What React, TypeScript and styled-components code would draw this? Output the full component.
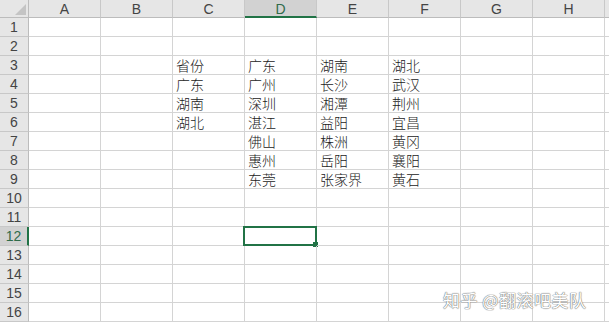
import React from "react";
import styled, { createGlobalStyle, css } from "styled-components";

const Global = createGlobalStyle`
  html, body { margin: 0; padding: 0; background: #fff; overflow: hidden; }
  #root { width: 609px; height: 325px; }
`;

const COLS = ["A", "B", "C", "D", "E", "F", "G", "H", "I"];
const VISIBLE_LABELS = 8;
const ROWS = 16;
const SEL_COL = "D";
const SEL_ROW = 12;

const data: Record<string, string> = {
  C3: "省份", C4: "广东", C5: "湖南", C6: "湖北",
  D3: "广东", D4: "广州", D5: "深圳", D6: "湛江", D7: "佛山", D8: "惠州", D9: "东莞",
  E3: "湖南", E4: "长沙", E5: "湘潭", E6: "益阳", E7: "株洲", E8: "岳阳", E9: "张家界",
  F3: "湖北", F4: "武汉", F5: "荆州", F6: "宜昌", F7: "黄冈", F8: "襄阳", F9: "黄石",
};

const Sheet = styled.div`
  position: relative;
  width: 609px;
  height: 325px;
  overflow: hidden;
  display: grid;
  grid-template-columns: 29px repeat(9, 72px);
  grid-template-rows: 18px repeat(${ROWS}, 19px);
  font-family: "Noto Sans CJK SC", "Liberation Sans", sans-serif;
`;

const Corner = styled.div`
  position: relative;
  background: #e6e6e6;
  border-right: 1px solid #bcbcbc;
  border-bottom: 1px solid #bcbcbc;
  &::after {
    content: "";
    position: absolute;
    right: 2px;
    bottom: 2px;
    width: 0;
    height: 0;
    border-left: 11px solid transparent;
    border-bottom: 11px solid #c4c4c4;
  }
`;

const ColHead = styled.div<{ $active?: boolean }>`
  display: flex;
  align-items: center;
  justify-content: center;
  background: #e6e6e6;
  border-right: 1px solid #c8c8c8;
  border-bottom: 1px solid #bcbcbc;
  color: #444;
  font-family: "Liberation Sans", Arial, sans-serif;
  font-size: 14px;
  padding-top: 1px;
  box-sizing: border-box;
  ${(p) =>
    p.$active &&
    css`
      background: #d2d2d2;
      color: #2f6b4a;
      border-bottom: 2px solid #217346;
      padding-top: 2px;
    `}
`;

const RowHead = styled.div<{ $active?: boolean }>`
  display: flex;
  align-items: center;
  justify-content: center;
  background: #e6e6e6;
  border-right: 1px solid #bcbcbc;
  border-bottom: 1px solid #c8c8c8;
  color: #444;
  font-family: "Liberation Sans", Arial, sans-serif;
  font-size: 14px;
  box-sizing: border-box;
  ${(p) =>
    p.$active &&
    css`
      background: #d2d2d2;
      color: #2f6b4a;
      border-right: 2px solid #217346;
    `}
`;

const Cell = styled.div`
  position: relative;
  border-right: 1px solid #d4d4d4;
  border-bottom: 1px solid #d4d4d4;
  box-sizing: border-box;
  display: flex;
  align-items: flex-end;
  padding: 0 0 0 3px;
  font-size: 14px;
  font-weight: 300;
  line-height: 18px;
  color: #1a1a1a;
  white-space: nowrap;
`;

const Selection = styled.div`
  position: absolute;
  left: -2px;
  top: -1px;
  right: -1px;
  bottom: -1px;
  border: 2px solid #217346;
  pointer-events: none;
  &::after {
    content: "";
    position: absolute;
    right: -4px;
    bottom: -4px;
    width: 5px;
    height: 5px;
    background: #217346;
    border: 1px solid #fff;
    border-top: none;
    border-left: none;
  }
`;

const Watermark = styled.div`
  position: absolute;
  left: 443px;
  top: 287px;
  font-family: "Noto Sans CJK SC", sans-serif;
  font-size: 17px;
  letter-spacing: 0.5px;
  color: #fff;
  text-shadow: 0 0 1px #777, 0 0 1px #777, 0 0 1px #999;
  white-space: nowrap;
`;

export default function App() {
  return (
    <>
      <Global />
      <Sheet>
        <Corner />
        {COLS.map((c, i) => (
          <ColHead key={c} $active={c === SEL_COL}>
            {i < VISIBLE_LABELS ? c : null}
          </ColHead>
        ))}
        {Array.from({ length: ROWS }, (_, i) => i + 1).map((r) => (
          <React.Fragment key={r}>
            <RowHead $active={r === SEL_ROW}>{r}</RowHead>
            {COLS.map((c) => (
              <Cell key={c + r}>
                {data[c + r]}
                {c === SEL_COL && r === SEL_ROW && <Selection />}
              </Cell>
            ))}
          </React.Fragment>
        ))}
        <Watermark>知乎 @翻滚吧美队</Watermark>
      </Sheet>
    </>
  );
}
